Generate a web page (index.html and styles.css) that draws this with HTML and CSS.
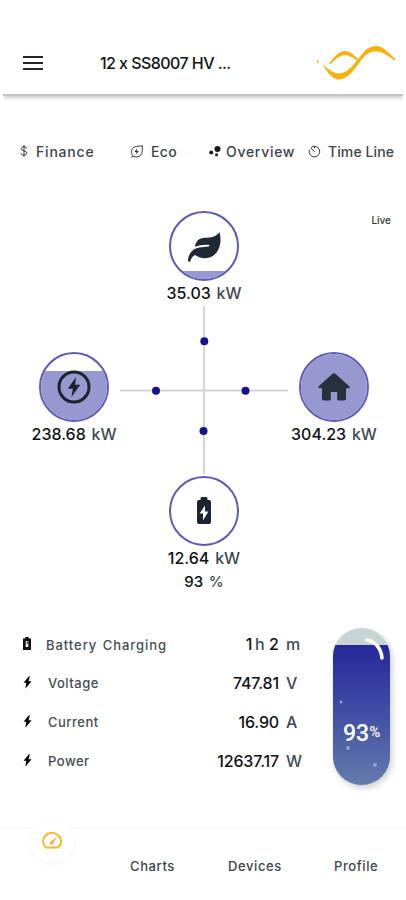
FILE: index.html
```
<!DOCTYPE html>
<html lang="en">
<head>
	<meta charset="utf-8">
	<meta name="viewport" content="width=device-width, initial-scale=1">
	<title>Energy</title>
	<link rel="stylesheet" href="styles.css">
</head>
<body>
	<svg class="sprite" width="0" height="0">
		<symbol id="bolt" viewBox="0 0 10 14"><path d="M6.6 0 0.6 7.4h3L2.6 14 9.5 5.6H6.2L7.6 0z"/></symbol>
	</svg>

	<header class="topbar">
		<svg class="menu" viewBox="0 0 20 14"><path d="M0 1h20M0 7h20M0 13h20" stroke="#26232f" stroke-width="2"/></svg>
		<h1>12 x SS8007 HV ...</h1>
		<svg class="logo" viewBox="0 0 80 36" fill="#fbb010">
			<path d="M1 15.500l1.500-1v3l-1.500.5z"/>
			<path d="M5.500 19C11 23 17 28.500 23 28.500 33 28.500 40 16 47 8 51 3 55 1 60 1 68 1 73 9 79.500 14L78.500 15.500C72 11 67 6.500 60 6.500 55 6.500 51 8 47 13 40 21 34 34 23 34.500 15 34.500 10 24 5.500 19z"/>
			<path d="M13 18.500C18 12 23 6 29 6c5 0 9 4 13 8l-1 1.500c-4-3-8-5.500-12-5.500-5 0-10 4.500-15 9.500z"/>
		</svg>
	</header>

	<nav class="tabs">
		<a class="finance">
			<svg width="8" height="12" viewBox="0 0 8 12" fill="none" stroke="#333a42"><path d="M7 3.5C6.6 1.3 1.2 1.2 1.2 3.6c0 2.5 5.8 2 5.8 4.5 0 2.6-5.7 2.6-6.1.2M4 0v12"/></svg>
			<span>Finance</span>
		</a>
		<a class="eco">
			<svg width="13" height="13" viewBox="0 0 13 13" fill="none" stroke="#333a42"><path d="M3.4 11.2C1 9.3.8 5.500 2.600 3.300 4.600.8 8 1.500 12.300.8c0 3.500.4 7.600-1.800 9.700-1.700 1.700-5 1.700-7.100.7L1.200 12.400"/><path d="M7 3.500 4.400 7h2L6 9.500 9 6H7z" fill="#333a42" stroke="none"/></svg>
			<span>Eco</span>
		</a>
		<a class="overview">
			<svg width="12" height="12" viewBox="0 0 12 12" fill="#16181d"><circle cx="8.500" cy="4" r="3"/><circle cx="2.200" cy="7.500" r="2"/><circle cx="7.500" cy="9.800" r="1.500"/></svg>
			<span>Overview</span>
		</a>
		<a class="timeline">
			<svg width="13" height="13" viewBox="0 0 13 13" fill="none" stroke="#333a42"><path d="M3.200 2.400A5.300 5.300 0 1 1 1.400 5M6.500 1.200V3.400M3 3l3.700 4"/></svg>
			<span>Time Line</span>
		</a>
	</nav>

	<main>
		<section class="flow">
			<span class="live">Live</span>
			<svg class="wires" width="168" height="168" viewBox="0 0 168 168">
				<path d="M84 0v168M0 84.5h168" stroke="#d5d5d7" stroke-width="2"/>
				<g fill="#13138b"><circle cx="84.3" cy="35.3" r="4"/><circle cx="36" cy="84.8" r="4"/><circle cx="125.5" cy="84.8" r="4"/><circle cx="83.5" cy="125" r="4"/></g>
			</svg>
			<div class="node solar">
				<div class="dial"><i class="level" style="height: 12%"></i>
					<svg width="36" height="31" viewBox="0 0 36 31"><path d="M33.500 1C36 10 34 21 26 25.500c-6 3.200-13 1.500-17-1.500-2.300 1.400-4 3-4.500 6-.5 1.300-2.800 1-2.600-.6C2.500 22.500 7 17.500 13 16.500l9.500-.9c1.200-.2 1.200-1.800 0-1.800-6.500-.2-9 .5-13.500 2C9.500 10.500 13 7 19 6.800 25 6.600 30 6 33.500 1z" fill="#202836"/></svg>
				</div>
				<p><b>35.03</b> <span>kW</span></p>
			</div>
			<div class="node grid">
				<div class="dial"><i class="level" style="height: 75%"></i>
					<svg width="34" height="34" viewBox="0 0 34 34"><circle cx="17" cy="17" r="15" fill="none" stroke="#1b2430" stroke-width="3"/><path d="M19 7 10.8 18.7h5L14.5 27 23.3 14.8h-5.1z" fill="#1b2430"/></svg>
				</div>
				<p><b>238.68</b> <span>kW</span></p>
			</div>
			<div class="node home">
				<div class="dial"><i class="level" style="height: 100%"></i>
					<svg width="34" height="30" viewBox="0 0 34 30"><path d="M15.6 1.8q1.4-1.3 2.8 0L32 14q1.7 1.8-.6 2.2H29v10.5q0 1.8-1.8 1.8h-5.4q-1.6 0-1.6-1.6v-7h-6.4v7q0 1.6-1.6 1.6H6.8Q5 28.500 5 26.700V16.200H2.600Q.3 15.800 2 14z" fill="#27313b"/></svg>
				</div>
				<p><b>304.23</b> <span>kW</span></p>
			</div>
			<div class="node battery">
				<div class="dial">
					<svg width="16" height="28" viewBox="0 0 16 28"><path d="M4.500 3V1.500Q4.500 0 6 0h4q1.500 0 1.500 1.500V3H13q2 0 2 2v20q0 2-2 2H3q-2 0-2-2V5q0-2 2-2z" fill="#1b2430"/><path d="M9 8.500 3.600 16.500H7V23.500L12.400 14.500H9z" fill="#fff"/></svg>
				</div>
				<p><b>12.64</b> <span>kW</span></p>
				<p class="soc"><b>93</b> <span>%</span></p>
			</div>
		</section>

		<section class="details">
			<ul>
				<li class="charging">
					<svg width="8" height="13" viewBox="0 0 8 13"><path d="M2.300 1.500V0h3.400v1.500H8V13H0V1.500z" fill="#111"/><path d="M2.700 4h2.600v6H2.700z" fill="#fff"/><path d="M4.200 4.500v2.600" stroke="#111"/></svg>
					<span class="label">Battery Charging</span>
					<span class="value"><b>1</b> <i>h</i> <b>2</b></span><span class="unit">m</span>
				</li>
				<li class="volts">
					<svg width="9" height="13"><use href="#bolt"/></svg>
					<span class="label">Voltage</span>
					<span class="value">747.81</span><span class="unit">V</span>
				</li>
				<li class="amps">
					<svg width="9" height="13"><use href="#bolt"/></svg>
					<span class="label">Current</span>
					<span class="value">16.90</span><span class="unit">A</span>
				</li>
				<li class="watts">
					<svg width="9" height="13"><use href="#bolt"/></svg>
					<span class="label">Power</span>
					<span class="value">12637.17</span><span class="unit">W</span>
				</li>
			</ul>
			<div class="tank">
				<div class="fluid" style="height: 89.5%"></div>
				<svg class="shine" width="57" height="157" viewBox="0 0 57 157">
					<path d="M34 12C43 14 48 21 49 30" fill="none" stroke="#fff" stroke-width="3.500" stroke-linecap="round"/>
					<g fill="#91a1d2"><circle cx="8" cy="74" r="1.500"/><circle cx="15" cy="120" r="2"/><circle cx="42" cy="137" r="2"/></g>
				</svg>
				<p class="percent">93<sup>%</sup></p>
			</div>
		</section>
	</main>

	<footer class="bottombar">
		<a class="dash">
			<svg width="20" height="17" viewBox="0 0 20 17" fill="none" stroke="#fbb72b" stroke-width="2"><path d="M4 15.500H16C20.500 12 19.800 7 17 4.200 13-.3 7-.1 3.200 3.800.1 7.200.2 12.200 4 15.500z"/><path d="M14.800 5 8.200 9.700a1.800 1.800 0 0 0 2.600 2.500z" fill="#fbb72b" stroke="none"/></svg>
		</a>
		<a class="charts">Charts</a>
		<a class="devices">Devices</a>
		<a class="profile">Profile</a>
	</footer>
</body>
</html>
```
FILE: styles.css
```
* {
	box-sizing: border-box;
}
body {
	background: #fff;
	color: #101114;
	font-family: Inter, "Open Sans", sans-serif;
	font-weight: 500;
	height: 900px;
	margin: 0;
	overflow: hidden;
	display: flex;
	flex-direction: column;
}
h1, p, ul {
	margin: 0;
	padding: 0;
}
.sprite {
	position: absolute;
}

/* header */
.topbar {
	border-bottom: 2px solid #c6c6c6;
	box-shadow: 0 2px 4px rgba(0, 0, 0, .2);
	clip-path: inset(0 0 -8px 0);
	display: flex;
	align-items: center;
	height: 96px;
	margin: 0 3px;
	padding: 31px 7px 0 20px;
}
.menu {
	width: 20px;
	height: 14px;
}
.topbar h1 {
	font-size: 16px;
	font-weight: 500;
	line-height: 20px;
	margin-left: 57px;
	letter-spacing: -.55px;
	white-space: nowrap;
}
.logo {
	width: 80px;
	height: 36px;
	margin-left: auto;
}

/* tabs */
.tabs {
	display: flex;
	height: 20px;
	margin-top: 45px;
	padding-left: 20px;
}
.tabs a {
	color: #3c444c;
	display: flex;
	align-items: center;
	gap: 8px;
	font-size: 14px;
	letter-spacing: .8px;
	white-space: nowrap;
}
.tabs .finance {
	width: 110px;
}
.tabs .eco {
	width: 79px;
	letter-spacing: .4px;
}
.tabs .overview {
	width: 99px;
	gap: 5px;
	letter-spacing: .7px;
}
.tabs .timeline {
	gap: 7px;
	letter-spacing: .1px;
}

/* power flow */
.flow {
	position: relative;
	height: 451px;
}
.live {
	position: absolute;
	top: 52px;
	right: 15px;
	font-size: 10px;
	line-height: 14px;
	color: #333;
}
.wires {
	position: absolute;
	left: 120px;
	top: 145px;
}
.node {
	position: absolute;
	width: 110px;
	text-align: center;
}
.solar {
	left: 149px;
	top: 50px;
}
.grid {
	left: 19px;
	top: 191px;
}
.home {
	left: 279px;
	top: 191px;
}
.battery {
	left: 149px;
	top: 315px;
}
.dial {
	position: relative;
	display: flex;
	align-items: center;
	justify-content: center;
	width: 70px;
	height: 70px;
	margin: 0 auto 2px;
	border: 2px solid #5b5bb4;
	border-radius: 50%;
	overflow: hidden;
}
.level {
	position: absolute;
	left: 0;
	right: 0;
	bottom: 0;
	background: #9698cf;
}
.dial svg {
	position: relative;
}
.node p {
	font-size: 16px;
	line-height: 20px;
	white-space: nowrap;
}
.node b {
	font-weight: 500;
}
.node span {
	color: #3d4953;
	margin-left: 1.5px;
}
.node .soc {
	font-size: 15px;
	margin-top: 4px;
}

/* battery details */
.details {
	display: flex;
	justify-content: space-between;
	padding: 16px 16px 0 23px;
}
.details ul {
	list-style: none;
	width: 279px;
	display: grid;
	grid-template-rows: 39px 39px 39px 39px;
}
.details li {
	display: flex;
	align-items: center;
	height: 31px;
	font-size: 16px;
}
.label {
	color: #454c54;
	font-size: 13px;
	letter-spacing: .5px;
	margin-left: 16px;
}
.charging .label {
	margin: 3px 0 0 15px;
	letter-spacing: .95px;
	word-spacing: 1px;
}
.value {
	margin-left: auto;
	letter-spacing: -.15px;
}
.charging .value {
	letter-spacing: .1px;
}
.value b {
	font-weight: 500;
}
.value i {
	color: #3d4953;
	font-style: normal;
	margin-left: -2px;
}
.unit {
	width: 23px;
	padding-left: 7px;
	color: #3d4953;
}
.tank {
	position: relative;
	display: flex;
	flex-direction: column;
	justify-content: flex-end;
	width: 57px;
	height: 157px;
	border-radius: 29px;
	background: #c8d3d4;
	box-shadow: 2px 3px 6px rgba(0, 0, 0, .2);
	overflow: hidden;
}
.fluid {
	background: linear-gradient(#24289a, #4250a6 50%, #657bab);
}
.shine {
	position: absolute;
	left: 0;
	top: 0;
}
.percent {
	position: absolute;
	left: 10px;
	top: 94px;
	color: #fff;
	font: 500 23px/24px Roboto, sans-serif;
}
.percent sup {
	font-size: 15px;
	line-height: 1;
	vertical-align: 4px;
}

/* bottom navigation */
.bottombar {
	display: flex;
	align-items: center;
	height: 72px;
	margin-top: auto;
	border-top: 1px solid #f7f8f8;
	box-shadow: 0 -1px 3px rgba(0, 0, 0, .02);
	color: #3c444c;
	font-size: 13px;
	letter-spacing: .6px;
}
.bottombar .dash {
	display: flex;
	align-items: center;
	justify-content: center;
	width: 44px;
	height: 44px;
	margin: -48px 0 0 30px;
	border-radius: 50%;
	background: #fff;
	box-shadow: 0 1px 4px rgba(0, 0, 0, .06);
}
.charts {
	width: 98px;
	margin: 3px 0 0 56px;
}
.devices {
	width: 106px;
	margin-top: 3px;
}
.profile {
	margin-top: 3px;
}
```
